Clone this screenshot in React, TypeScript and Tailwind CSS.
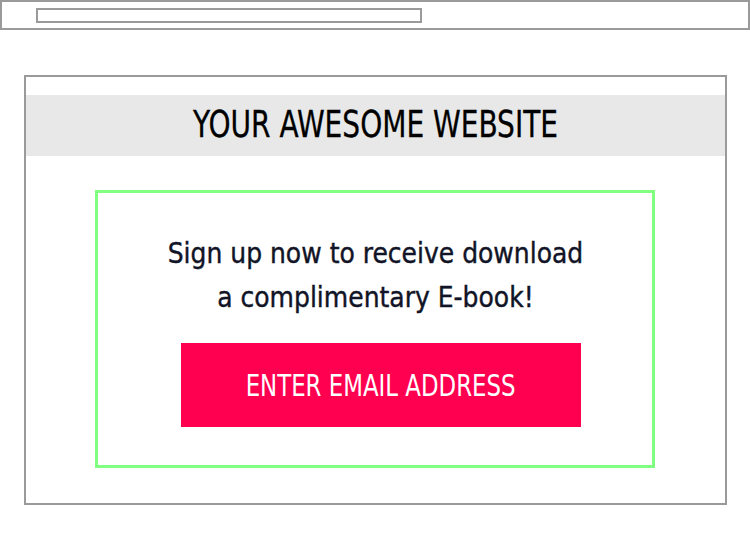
export default function App() {
  return (
    <div className="w-[750px] h-[550px] bg-white relative overflow-hidden" style={{ fontFamily: '"DejaVu Sans Condensed", "DejaVu Sans", sans-serif' }}>
      <div className="h-[30px] border-2 border-[#9a9a9a] box-border">
        <div className="ml-[34px] mt-[6px] w-[386px] h-[15px] border-2 border-[#9a9a9a]" />
      </div>
      <div className="ml-[24px] mt-[45px] w-[703px] h-[430px] border-2 border-[#9a9a9a] pt-[18px] box-border">
        <div className="h-[61px] bg-[#e8e8e8] flex items-center justify-center">
          <span className="inline-block text-[38px] text-black leading-none scale-x-[0.82] -mt-[3px] [-webkit-text-stroke:0.3px_#000]">YOUR AWESOME WEBSITE</span>
        </div>
        <div className="ml-[69px] mt-[34px] w-[560px] h-[278px] border-[3px] border-[#80ff80] box-border flex flex-col items-center">
          <div className="mt-[38px] text-[29px] leading-[44px] text-[#111426] text-center scale-x-[0.96] [-webkit-text-stroke:0.4px_#111426]">
            <div>Sign up now to receive download</div>
            <div>a complimentary E-book!</div>
          </div>
          <div className="mt-[24px] ml-[12px] w-[400px] h-[84px] bg-[#ff0050] flex items-center justify-center">
            <span className="inline-block text-white text-[31px] leading-none scale-x-[0.82]">ENTER EMAIL ADDRESS</span>
          </div>
        </div>
      </div>
    </div>
  );
}
